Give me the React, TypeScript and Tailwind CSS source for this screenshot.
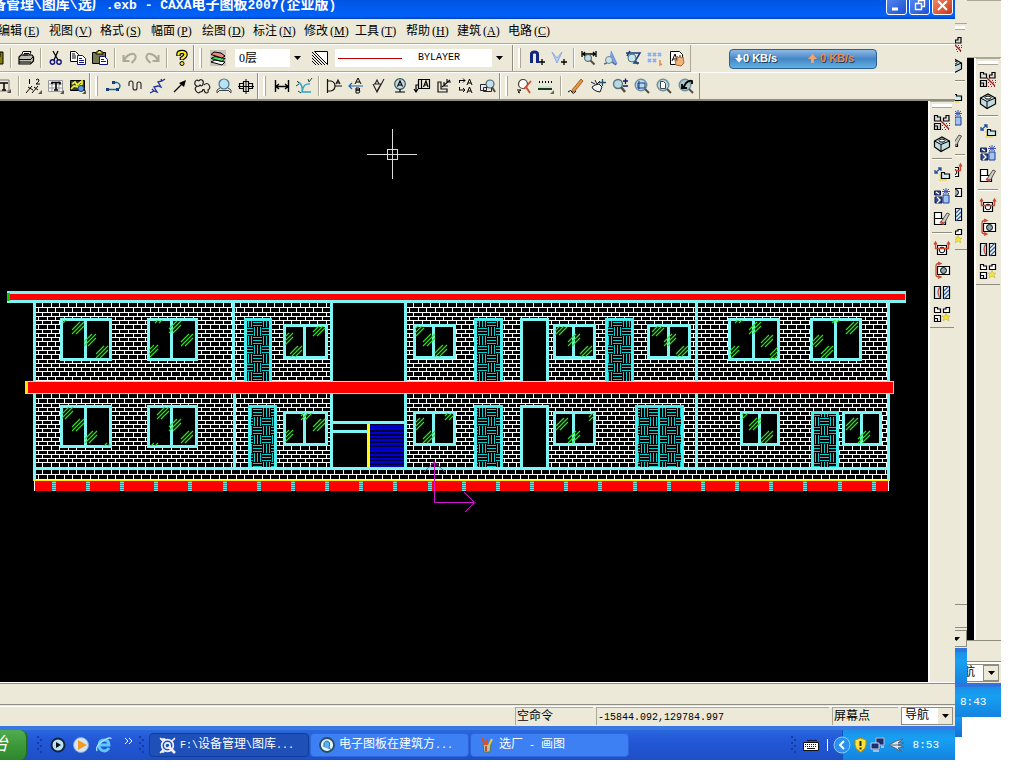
import React from "react";

const FONT = "font-['Liberation_Mono','Noto_Sans_CJK_SC',monospace]";

/* Splits a string so that half-width and full-width runs share one 6px/12px grid. */
function T({ s, ascii = "text-[10px]", cjk = "text-[12px]" }: { s: string; ascii?: string; cjk?: string }) {
  const runs = s.match(/[\x00-\x7f]+|[^\x00-\x7f]+/g) ?? [];
  return (
    <span className="whitespace-pre">
      {runs.map((r, i) => (
        <span key={i} className={r.charCodeAt(0) < 128 ? ascii : cjk}>
          {r}
        </span>
      ))}
    </span>
  );
}

/* ---------- icons ---------- */

const glyphs: Record<string, React.ReactNode> = {
  save: (
    <>
      <path d="M1 2h14v12H2l-1-1z" fill="#808000" stroke="#000" />
      <path d="M4 2h8v5H4z" fill="#fff" stroke="#000" />
      <path d="M5 10h7v4H5z" fill="#000" />
    </>
  ),
  print: (
    <>
      <path d="M5 1.5h8l-2 5H3z" fill="#fff" stroke="#000" />
      <path d="M1 7l2-2h11l1.500 2v4l-3 3H1z" fill="#bdbdb0" stroke="#000" strokeWidth="1.200" />
      <path d="M1 9.500h12M1 12h12M13 9l2-2M6 3.500h5M5 5h5" stroke="#000" />
    </>
  ),
  cut: (
    <>
      <path d="M5 1l5 9M10 1L6 10" stroke="#000" strokeWidth="1.300" />
      <circle cx="4.500" cy="12" r="2.200" stroke="#10107c" strokeWidth="1.400" />
      <circle cx="11" cy="12" r="2.200" stroke="#10107c" strokeWidth="1.400" />
    </>
  ),
  copy: (
    <>
      <path d="M.500 1.500h5l3 3v7h-8z" fill="#fff" stroke="#000" />
      <path d="M2 4h3M2 6h4M2 8h4" stroke="#000" />
      <path d="M7.500 5.500h5l3 3v6h-8z" fill="#fff" stroke="#10107c" />
      <path d="M9 8.500h3M9 10.500h5M9 12.500h5" stroke="#10107c" />
    </>
  ),
  paste: (
    <>
      <path d="M.500 2.500h13v11H.500z" fill="#77774a" stroke="#000" />
      <path d="M4 4V2h2V.500h3V2h2v2z" fill="#e8e05a" stroke="#000" />
      <path d="M7.500 6.500h5l3 3v5h-8z" fill="#fff" stroke="#10107c" />
      <path d="M9 9.500h3M9 11.500h5" stroke="#10107c" />
    </>
  ),
  undo: <path d="M1.500 5v6h6M2.500 10C5 4 12 2 13.500 6c1 3-2 5-4 7" stroke="#aaa89a" strokeWidth="2" />,
  redo: <path d="M14.500 5v6h-6M13.500 10C11 4 4 2 2.500 6c-1 3 2 5 4 7" stroke="#aaa89a" strokeWidth="2" />,
  help: (
    <>
      <path d="M4.500 6V4q0-2 3.500-2t3.500 2.500q0 2-3.500 4V10" stroke="#000" strokeWidth="4.500" />
      <circle cx="8" cy="13.500" r="2" fill="#ffe818" stroke="#000" />
      <path d="M4.500 5.500V4q0-2 3.500-2t3.500 2.500q0 2-3.500 4v1" stroke="#ffe818" strokeWidth="2.200" />
    </>
  ),
  layers: (
    <>
      <path d="M0 0h16v16H0z" fill="#c9c5bd" />
      <path d="M1 12l4-2 10 2-3 3z" fill="#fff" stroke="#000" />
      <path d="M1 8.500l4-2 10 2-3 3z" fill="#49e15c" stroke="#000" />
      <path d="M1 4.500L4 2l7 1 4 3-3 2z" fill="#ee8686" stroke="#000" />
    </>
  ),
  linewidth: (
    <>
      <path d="M2.500 1.500H15.500V14.500z" fill="#fff" stroke="#000" />
      <path d="M0 2l13 13M0 5l10 10M0 8l7 7M0 11l4 4" stroke="#000" />
    </>
  ),
  magnet: (
    <>
      <path d="M2.500 13V4q0-2 3-2t3 2v9" stroke="#12267f" strokeWidth="3" />
      <path d="M13 9v6M10 12h6" stroke="#000" strokeWidth="1.300" />
    </>
  ),
  vsnap: (
    <>
      <path d="M1 2l5 11 5-11-5 6z" fill="#bcd0fa" stroke="#90a8e4" />
      <path d="M13 9v6M10 12h6" stroke="#000" strokeWidth="1.300" />
    </>
  ),
  dimsearch: (
    <>
      <path d="M1 1v6M15 1v6M2 4h12M4 2L2 4l2 2M12 2l2 2-2 2" stroke="#000" strokeWidth="1.300" />
      <circle cx="7" cy="8" r="3.500" fill="#b5dfe8" stroke="#55584e" />
      <path d="M9.500 10.500l4 4" stroke="#554c44" strokeWidth="2" />
    </>
  ),
  textsearch: (
    <>
      <path d="M8 1l6 13h-3l-2-4H6" fill="#7aa4ec" stroke="#688cda" />
      <circle cx="6" cy="10" r="3.500" fill="#c4e4ec" stroke="#77818c" />
      <path d="M9 12l4 3M1 14l3-1" stroke="#5a6d8c" strokeWidth="1.500" />
    </>
  ),
  zsearch: (
    <>
      <path d="M1 3h14L9 13h5M2 6l3-5" stroke="#173e83" strokeWidth="1.500" />
      <circle cx="7" cy="8" r="4" fill="#b8e4ec" fillOpacity=".8" stroke="#4e7283" />
      <path d="M10 11l3 3" stroke="#344c65" strokeWidth="2" />
    </>
  ),
  points: (
    <>
      <path d="M1 3l3 3m0-3L1 6M6 3l3 3m0-3L6 6M1 9l3 3m0-3l-3 3M6 9l3 3m0-3l-3 3M11 3l3 3m0-3l-3 3" stroke="#8caef2" strokeWidth="2" />
      <path d="M13 10v5l2-1" stroke="#e28a54" strokeWidth="1.500" />
    </>
  ),
  handpage: (
    <>
      <path d="M1.500 1.500h9l3 3v10h-12z" fill="#fff" stroke="#000" />
      <path d="M3 11l3-7 2 6M4 9h3" stroke="#000" />
      <path d="M7 15l-1-5 2 1V6l2 2 1-3 1 3 2-1 1 6-3 3z" fill="#efb37a" stroke="#b4683c" />
    </>
  ),
  textbox: (
    <>
      <path d="M1 2h12v11H1z" stroke="#777" />
      <path d="M4 5h8M8 5v7M6 12h4" stroke="#000" strokeWidth="1.500" />
      <path d="M15 11v4h-4z" fill="#555" />
    </>
  ),
  half: (
    <>
      <path d="M3.500 1v5M10 2q2-2 3 0 0 2-3 4h4" stroke="#000" />
      <path d="M0 15l6-7M6 15l6-7M2 9l5 3M8 9l4 3" stroke="#000" />
      <path d="M16 12v4h-4z" fill="#555" />
    </>
  ),
  gridtext: (
    <>
      <path d="M.500 2.500h14v11H.500zM0 6h15M0 10h15M4 2v12M11 2v12" stroke="#999" fill="#f8f8f8" />
      <path d="M4 4.500h8v2M4 4v2M8 4v8M6 12h4" stroke="#000" strokeWidth="1.600" />
      <path d="M16 12v4h-4z" fill="#555" />
    </>
  ),
  library: (
    <>
      <path d="M.500 2.500h14v10H.500z" fill="#343c34" stroke="#000" />
      <path d="M2 6l3-2 2 3 5-4v3L8 9 4 8l-3 3" stroke="#f0ee33" strokeWidth="1.700" />
      <circle cx="11" cy="10.500" r="3" fill="#5b9de2" stroke="#153b7a" />
      <path d="M16 12v4h-4z" fill="#555" />
    </>
  ),
  arc: (
    <>
      <path d="M1 11.500h10q3-1 3-3.500t-3-3.500H7" stroke="#156b8c" strokeWidth="1.300" />
      <path d="M0 10h3v3H0zM6 3h3v3H6zM10 10h3v3h-3z" fill="#12407d" />
    </>
  ),
  wave: <path d="M1 8V5q0-2 2-2t2 2v5q0 2 2 2t2-2V6q0-2 2-2t2 2v5" stroke="#222" strokeWidth="1.100" />,
  zigzag: <path d="M0 15l4-2 3 1-3-5 4-1 3 1-3-5 4-1 3-2M4 13l-2-2M12 3l-1-2" stroke="#1d2f9b" strokeWidth="1.300" />,
  arrow: (
    <>
      <path d="M2 14l9-9" stroke="#000" strokeWidth="1.300" />
      <path d="M14 2L12 9 7 5z" fill="#000" />
    </>
  ),
  cloud: (
    <path
      d="M5 3Q2 1 1 4t2 4q2 1 3-1 2 2 3-1t-1-4q-2-1-3 1M10 7q3-3 5 0t-1 5q1 3-2 3-2-1-2-4M3 8q-3 2-1 5t4 1q3 0 3-3"
      stroke="#222"
      strokeWidth="1.200"
    />
  ),
  bulb: (
    <>
      <circle cx="8" cy="6" r="5" fill="#b7e4f5" stroke="#4b748c" strokeWidth="1.200" />
      <path d="M4 10l-3 2v3l3-3M12 10l3 2v3l-3-3M4 12.500h8" stroke="#444" />
    </>
  ),
  plug: (
    <>
      <path d="M5.500 3.500h5v10h-5zM1.500 5.500h4v5h-4zM10.500 5.500h4v5h-4z" stroke="#000" strokeWidth="1.200" />
      <path d="M8 1v15M0 8.500h16" stroke="#000" />
    </>
  ),
  dim: <path d="M1.500 2v12M14.500 2v12M2 8.500h12M5 6L2 8.500 5 11M11 6l3 2.500-3 2.500" stroke="#000" strokeWidth="1.400" />,
  axes: (
    <>
      <path d="M2 4q5 2 4 10h9M6 14q1-9 8-8" stroke="#2ba3cc" strokeWidth="1.400" />
      <path d="M0 8l3-2M1 3l2 2M12 1l1 3 3-4M2 13l3 2" stroke="#20494e" />
    </>
  ),
  section: <path d="M1.500 1v14M1 3h4q4 1 4 5t-4 5H1M9 8h7M10 6l2-4 2 4M10.500 5h3" stroke="#111" strokeWidth="1.200" />,
  ab: (
    <>
      <path d="M7 6l3-6 3 6M8 4h4M8 15v-5h3l1 1-1 1H8h3l1 1-1 2z" stroke="#000" />
      <path d="M1 8h14M4 5L1 8l3 3" stroke="#225fac" strokeWidth="1.200" />
    </>
  ),
  rough: <path d="M3 6l4 8 7-13M4 6h7l-4 7M5 6l2-4 2 4" stroke="#222" strokeWidth="1.100" />,
  datum: (
    <>
      <circle cx="8" cy="6" r="5.300" fill="#c5dbe2" stroke="#32565e" strokeWidth="1.200" />
      <path d="M5.500 8.500L8 3l2.500 5.500M6.500 7h3M8 11v3M3 14h10" stroke="#000" strokeWidth="1.200" />
    </>
  ),
  frame: <path d="M4.500 1.500h11v9h-11zM7.500 1v9M9.500 9L12 3l2 6M10 7h3M4 7H2v7M0 11l2 3 2-3" stroke="#000" strokeWidth="1.200" />,
  weld: <path d="M2 4v10h9v-3H5V4zM6 9l8-7M8 4v4h4M11 1v3h4" stroke="#111" strokeWidth="1.200" />,
  aa: <path d="M1 2.500h6M5 .500l2 2-2 2M1.500 2v3M9 7l2.500-6L14 7M10 5h3M1 12h6M5 10l2 2-2 2M1.500 9v3M9 15l2.500-6 2.500 6M10 13h3" stroke="#000" />,
  boxsearch: (
    <>
      <path d="M.500 6.500h6v6h-6zM3.500 9.500h8v4h-8z" stroke="#223" />
      <circle cx="10" cy="6" r="4" fill="#c5e0ec" stroke="#4b6474" strokeWidth="1.200" />
      <path d="M12 9l3 5" stroke="#554c44" strokeWidth="2" />
    </>
  ),
  findred: (
    <>
      <circle cx="7" cy="6" r="4.500" fill="#fff" stroke="#423b36" strokeWidth="1.200" />
      <path d="M10 9l4 6M15 3L8 11" stroke="#c4502e" strokeWidth="1.800" />
      <path d="M1 12h4l-3 2 2 1" stroke="#000" />
    </>
  ),
  ruler: (
    <>
      <path d="M1 4h1m2 0h1m2 0h1m2 0h1m2 0h1" stroke="#000" strokeWidth="2" />
      <path d="M0 11h14" stroke="#1a382d" strokeWidth="2" />
      <path d="M0 9h14" stroke="#b8dcb8" />
      <path d="M16 12v4h-4z" fill="#6b694c" />
    </>
  ),
  pencil: (
    <>
      <path d="M4 12L13 1l2 2-8 10-3 1z" fill="#e5953c" stroke="#a5622a" />
      <path d="M0 14q3-3 4 0t4-1" stroke="#000" />
    </>
  ),
  pan: (
    <>
      <path d="M1 4l4 2M5 2l2 4 3-3M2 9l3-2 4-1 3 3-2 5-4-1-3-2z" stroke="#121c26" fill="#f3f3f0" />
      <path d="M12.500 1v7M9 4.500h7" stroke="#22506b" strokeWidth="1.300" />
    </>
  ),
  zoompm: (
    <>
      <circle cx="6" cy="6" r="4.500" fill="#b8d8e4" stroke="#55717e" strokeWidth="1.300" />
      <path d="M9 9l4 5" stroke="#554c44" strokeWidth="2.500" />
      <path d="M11 3h5M13.500.500V6M11 8h5" stroke="#10196f" strokeWidth="1.300" />
    </>
  ),
  zoomwin: (
    <>
      <circle cx="7" cy="7" r="5.800" fill="#b8d8e4" stroke="#70909c" strokeWidth="1.400" />
      <path d="M4 5h7v5H4zM5 3v8" stroke="#163a8b" />
      <path d="M11 11l4 4" stroke="#554c44" strokeWidth="2" />
    </>
  ),
  zoompage: (
    <>
      <circle cx="7" cy="7" r="5.800" fill="#b8d8e4" stroke="#70909c" strokeWidth="1.400" />
      <path d="M4.500 3.500h3l2 2v5h-5z" fill="#fff" stroke="#444" />
      <path d="M11 11l4 4" stroke="#554c44" strokeWidth="2" />
    </>
  ),
  zoomback: (
    <>
      <circle cx="7" cy="7" r="5.800" fill="#aac6cc" stroke="#70909c" strokeWidth="1.400" />
      <path d="M5 10l3-5q3-3 6-2v3M4 6v4h5" stroke="#000" strokeWidth="1.800" />
      <path d="M11 11l4 4" stroke="#554c44" strokeWidth="2" />
    </>
  ),
  blocks: (
    <>
      <path d="M.500 1.500h3V3h3v4h-6zM9.500 7V4H12V1.500h3V7zM.500 9.500h6v6h-6zM.500 12h3v3.500" stroke="#000" strokeWidth="1.200" fill="#ddd" />
      <path d="M7 7l8 8" stroke="#a11b24" strokeWidth="1.300" />
      <path d="M12 9.500h1m2 0h1m-3 2h1m1 0h1m-8 0h1m1 2h1m-3 2h1m2 0h1m2 0h1" stroke="#a11b24" />
    </>
  ),
  cube: (
    <>
      <path d="M.500 5L8 1l7.500 4v6L7 15.500.500 11z" fill="#c3dce2" stroke="#000" strokeWidth="1.200" />
      <path d="M.500 5L7 8.500l8.500-3.500M7 8.500v7" stroke="#000" />
      <ellipse cx="8" cy="4.600" rx="3" ry="1.500" fill="#fff" stroke="#000" />
    </>
  ),
  move: (
    <>
      <path d="M5 9h2v4M5 14h8" stroke="#f0d878" strokeWidth="2" />
      <path d="M1 7l6-5M4 2h3v3M1 4v3h3" stroke="#27549d" strokeWidth="1.300" />
      <path d="M7.500 6.500h3V8h5v4.500h-8z" fill="#c9ecf3" stroke="#000" strokeWidth="1.200" />
    </>
  ),
  array: (
    <>
      <path d="M.500 3h6v4h-6zM1 9h7v6H1z" fill="#30488f" stroke="#111c50" />
      <path d="M9 7h6v8H9z" fill="#9ec3f4" stroke="#1f3c91" />
      <path d="M9 1l6 5m0-5L9 6M8 3.500h8M12 0v6" stroke="#3756b9" />
      <path d="M3 9l3 3-3 3M2 4l3 2" stroke="#fff" strokeWidth="1.300" />
    </>
  ),
  erase: (
    <>
      <path d="M.500 2.500h7v6h-7zM.500 8.500h11v6H.500z" fill="#fff" stroke="#000" strokeWidth="1.200" />
      <path d="M7 12l6-9 2.500 1-5 9z" fill="#d0cbc2" stroke="#555" />
      <path d="M6 12l4 2" stroke="#cc4e43" strokeWidth="2" />
    </>
  ),
  clampv: (
    <>
      <path d="M3.500 5.500h9v9h-9z" fill="#fff" stroke="#000" strokeWidth="1.200" />
      <circle cx="8" cy="10" r="2.800" stroke="#000" />
      <path d="M1.500 2v6.500h13V2M0 4.500L1.500 2 3 4.500M13 4.500L14.500 2 16 4.500" stroke="#c94a35" strokeWidth="1.300" />
    </>
  ),
  clamph: (
    <>
      <path d="M3.500 4.500h12v8h-12z" fill="#fff" stroke="#000" strokeWidth="1.200" />
      <circle cx="9.500" cy="8.500" r="3" fill="#8ca8a8" stroke="#000" />
      <path d="M6 1.500Q2 1 2 4v9q0 2 4 2M4 0l3 1.500L4 3M4 16.500L7 15l-3-1.500" stroke="#c94a35" strokeWidth="1.300" />
    </>
  ),
  hatch: (
    <>
      <path d="M.500 2.500h6v12h-6z" fill="#ccecf6" stroke="#000" strokeWidth="1.200" />
      <path d="M9.500 2.500h6v12h-6z" fill="#fff" stroke="#000" strokeWidth="1.200" />
      <path d="M10 7l5-5M10 11l5-5M10 15l5-5" stroke="#2b60a0" strokeWidth="1.300" />
      <path d="M6 3q-4 5 0 11" stroke="#cf4b3c" strokeWidth="1.300" />
    </>
  ),
  explode: (
    <>
      <path d="M.500 1.500h3V3h3v3.500h-6zM9.500 6.500V3H12V1.500h3.500v5zM.500 9.500h6v6h-6zM.500 12.500h3v3" stroke="#000" strokeWidth="1.200" fill="#fff" />
      <path d="M12 7l1 3h3l-2 2 1 3-3-2-3 2 1-3-2-2h3z" fill="#f2e53b" stroke="#c9b53a" strokeWidth=".6" />
    </>
  ),
};

function IconButton({ name, label }: { name: string; label: string }) {
  return (
    <button type="button" aria-label={label} className="flex h-[22px] w-[22px] shrink-0 items-center justify-center">
      <svg width="16" height="16" viewBox="0 0 16 16" fill="none" overflow="visible">
        {glyphs[name]}
      </svg>
    </button>
  );
}

const Sep = () => (
  <div className="flex w-2 shrink-0 justify-center py-[3px]">
    <div className="w-[2px] border-l border-[#aca899] bg-white" />
  </div>
);

const Grip = () => (
  <div className="flex w-[14px] shrink-0">
    <div className="w-[2px] border-l border-[#8f8c80] bg-white" />
    <div className="my-[3px] ml-1 w-[3px] border-r border-[#aca899] bg-white" />
  </div>
);

type Item = [string, string] | "|" | "#";

function Items({ items }: { items: Item[] }) {
  return (
    <>
      {items.map((it, i) =>
        it === "|" ? <Sep key={i} /> : it === "#" ? <Grip key={i} /> : (
          <div key={i} className="flex items-center">
            <IconButton name={it[0]} label={it[1]} />
          </div>
        )
      )}
    </>
  );
}

const fileItems: Item[] = [
  ["save", "保存"], "|", ["print", "打印"], "|", ["cut", "剪切"], ["copy", "复制"], ["paste", "粘贴"], "|",
  ["undo", "撤销"], ["redo", "重做"], "|", ["help", "帮助"], "#", ["layers", "图层"],
];
const snapItems: Item[] = [
  ["magnet", "捕捉"], ["vsnap", "捕捉点"], "|", ["dimsearch", "尺寸查询"], ["textsearch", "文字查询"],
  ["zsearch", "图形查询"], ["points", "点"], ["handpage", "页面"],
];
const drawItems: Item[] = [
  ["textbox", "文字"], "|", ["half", "公式"], ["gridtext", "表格"], ["library", "图库"], "#",
  ["arc", "圆弧"], ["wave", "波浪线"], ["zigzag", "折线"], ["arrow", "箭头"], ["cloud", "云线"],
  ["bulb", "局部放大"], ["plug", "孔轴"], "#", ["dim", "尺寸"], ["axes", "坐标"], "|",
  ["section", "倒角"], ["ab", "引出"], ["rough", "粗糙度"], ["datum", "基准"], ["frame", "形位公差"],
  ["weld", "焊接"], ["aa", "剖切"], ["boxsearch", "标注编辑"], "#", ["findred", "查找"], ["ruler", "距离"], "|",
  ["pencil", "重画"], ["pan", "平移"], ["zoompm", "缩放"], ["zoomwin", "窗口"], ["zoompage", "全部"], ["zoomback", "回溯"],
];
const sideItems: Item[] = [
  ["blocks", "块"], ["cube", "实体"], "|", ["move", "平移"], ["array", "阵列"], ["erase", "删除"], "|",
  ["clampv", "拉伸"], ["clamph", "旋转"], ["hatch", "镜像"], ["explode", "打散"],
];

function SideBar({ clip = false }: { clip?: boolean }) {
  return (
    <div className={clip ? "-ml-[15px] flex w-[27px] flex-col" : "flex w-[27px] shrink-0 flex-col border-l-2 border-white bg-[#ece9d8] pr-px"}>
      <div className="h-[10px] border-t border-[#aca899] px-[2px] pt-[2px]">
        <div className="h-[4px] border-b border-[#aca899] bg-white" />
      </div>
      <div className="flex flex-col items-center border-b border-[#8f8c80] pb-[2px]">
        {sideItems.map((it, i) =>
          it === "|" ? (
            <div key={i} className="flex h-2 w-full items-center px-[2px]">
              <div className="h-[2px] w-full border-t border-[#8f8c80] bg-white" />
            </div>
          ) : (
            <IconButton key={i} name={it[0]} label={it[1]} />
          )
        )}
      </div>
    </div>
  );
}

const Caret = () => (
  <span className="pointer-events-none flex w-[14px] shrink-0 items-center justify-center bg-[#ece9d8]">
    <svg width="7" height="4" viewBox="0 0 7 4">
      <path d="M0 0h7L3.500 4z" fill="#000" />
    </svg>
  </span>
);

/* ---------- building elevation ---------- */

const CY = "#7df5f5";

function bricks(x0: number, y0: number, x1: number, y1: number) {
  let d = "";
  for (let row = 0; y0 + row * 4.27 < y1; row++) {
    const top = Math.round(y0 + row * 4.27);
    const bottom = Math.min(y1, Math.round(y0 + (row + 1) * 4.27));
    if (bottom < y1) d += `M${x0} ${bottom}h${x1 - x0}v1H${x0}z`;
    for (let x = x0 + (row % 2 ? 2 : 6); x < x1; x += 8.6) d += `M${Math.round(x)} ${top}h1V${bottom}h-1z`;
  }
  return <path d={d} fill="#fff" shapeRendering="crispEdges" />;
}

type Box = [number, number, number, number];
const windows: { b: Box; g: [number, number][] }[] = [
  { b: [60, 318, 112, 361], g: [[78, 328], [90, 340], [102, 352], [65, 317]] },
  { b: [147, 318, 198, 361], g: [[175, 327], [187, 340], [152, 351], [161, 317]] },
  { b: [283, 324, 328, 359], g: [[287, 339], [296, 352], [319, 330]] },
  { b: [413, 324, 456, 359], g: [[418, 330], [429, 340], [441, 351]] },
  { b: [553, 324, 596, 359], g: [[561, 329], [574, 340], [586, 352]] },
  { b: [647, 324, 691, 359], g: [[658, 330], [670, 340], [682, 352]] },
  { b: [728, 318, 780, 361], g: [[755, 328], [767, 341], [733, 352], [741, 317], [776, 353]] },
  { b: [810, 318, 862, 361], g: [[817, 341], [827, 352], [852, 328], [838, 317]] },
  { b: [60, 405, 112, 448], g: [[67, 413], [78, 425], [91, 437], [105, 449]] },
  { b: [147, 405, 198, 448], g: [[163, 413], [175, 425], [187, 437], [152, 449]] },
  { b: [283, 411, 328, 446], g: [[307, 414], [319, 425], [287, 436]] },
  { b: [413, 411, 456, 446], g: [[418, 424], [429, 437], [451, 414]] },
  { b: [553, 411, 596, 446], g: [[562, 424], [574, 437], [595, 415]] },
  { b: [740, 411, 780, 446], g: [[744, 413], [755, 424], [767, 437]] },
  { b: [842, 411, 882, 446], g: [[852, 424], [864, 437]] },
];
const wovenDoors: Box[] = [
  [244, 318, 272, 382], [474, 318, 503, 382], [605, 318, 634, 382],
  [248, 405, 277, 468], [474, 405, 503, 468], [635, 405, 684, 468], [811, 411, 839, 468],
];
const openDoors: Box[] = [[520, 318, 549, 382], [520, 405, 549, 468]];

function glint([cx, cy]: [number, number]) {
  return `M${cx - 6} ${cy + 2}l8 -8M${cx - 6} ${cy + 6}l12 -12M${cx - 2} ${cy + 6}l8 -8`;
}

function Elevation() {
  return (
    <svg
      className="block min-w-0 flex-1 bg-black"
      viewBox="0 101 928 581"
      preserveAspectRatio="xMidYMid meet"
      role="img"
      aria-label="选厂立面图"
    >
      <defs>
        <pattern id="weave" width="18" height="18" patternUnits="userSpaceOnUse" x="1" y="3">
          <path
            d="M1 0h1v9h-1zM4 0h1v9h-1zM7 0h1v9h-1zM9 1h9v1h-9zM9 4h9v1h-9zM9 7h9v1h-9zM0 10h9v1h-9zM0 13h9v1h-9zM0 16h9v1h-9zM10 9h1v9h-1zM13 9h1v9h-1zM16 9h1v9h-1z"
            fill="#10cccc"
            shapeRendering="crispEdges"
          />
        </pattern>
        <pattern id="stud" width="4" height="2" patternUnits="userSpaceOnUse">
          <path d="M0 0h4v2H0z" fill="#5a7f86" />
          <path d="M0 0h4v1H0z" fill="#6de3e3" />
        </pattern>
      </defs>

      {bricks(36, 303, 331, 381)}
      {bricks(407, 303, 888, 381)}
      {bricks(36, 394, 331, 467)}
      {bricks(407, 394, 888, 467)}
      {bricks(36, 470, 888, 480)}

      <g shapeRendering="crispEdges">
        {windows.map(({ b: [x1, y1, x2, y2] }, i) => (
          <g key={i} fill="#000" stroke={CY} strokeWidth="3">
            <rect x={x1 + 1.5} y={y1 + 1.5} width={x2 - x1 - 3} height={y2 - y1 - 3} />
            <path d={`M${Math.floor((x1 + x2) / 2) - 0.5} ${y1 + 1}V${y2 - 1}`} />
          </g>
        ))}
        {openDoors.map(([x1, y1, x2, y2], i) => (
          <path key={i} d={`M${x1 + 1.5} ${y2}V${y1 + 1.5}H${x2 - 1.5}V${y2}`} fill="#000" stroke={CY} strokeWidth="3" />
        ))}
        {wovenDoors.map(([x1, y1, x2, y2], i) => (
          <g key={i}>
            <path d={`M${x1} ${y1}H${x2}V${y2}H${x1}z`} fill="#000" />
            <path d={`M${x1} ${y1}H${x2}V${y2}H${x1}z`} fill="url(#weave)" />
            <path d={`M${x1 + 1.5} ${y2}V${y1 + 1.5}H${x2 - 1.5}V${y2}`} fill="none" stroke="#49eded" strokeWidth="3" />
          </g>
        ))}
        <path d="M659 408V468" stroke="#12dede" strokeWidth="2" />
      </g>

      {windows.map(({ b: [x1, y1, x2, y2] }, i) => (
        <clipPath key={i} id={`pane${i}`}>
          <rect x={x1 + 2} y={y1 + 2} width={x2 - x1 - 4} height={y2 - y1 - 4} />
        </clipPath>
      ))}
      {windows.map(({ g }, i) => (
        <path key={i} d={g.map(glint).join("")} stroke="#2ee022" strokeWidth="1.200" fill="none" clipPath={`url(#pane${i})`} />
      ))}

      <g shapeRendering="crispEdges">
        {/* walls */}
        <path
          d="M33 303h3v178h-3zM232 303h3v78h-3zM233 394h3v74h-3zM330 303h3v164h-3zM404 303h3v164h-3zM695 303h3v165h-3zM887 303h3v178h-3zM33 467h857v3H33z"
          fill={CY}
        />
        {/* stair hall */}
        <path d="M333 421h71v3h-71zM333 430h35v3h-35z" fill={CY} />
        <path d="M370 424h34v43h-34z" fill="#000038" />
        <path
          d="M370 425h34v2h-34zM370 428h34v2h-34zM370 432h34v2h-34zM370 436h34v2h-34zM370 439h34v2h-34zM370 443h34v2h-34zM370 447h34v2h-34zM370 450h34v2h-34zM370 454h34v2h-34zM370 458h34v2h-34zM370 461h34v2h-34zM370 465h34v2h-34z"
          fill="#0000d0"
        />
        <path d="M367 424h3v43h-3z" fill="#ff0" />
        {/* roof slab */}
        <path d="M7 291h899v12H7z" fill={CY} />
        <path d="M10 294h895v6H10z" fill="#f00" />
        <path d="M7 293h3v8H7z" fill="#0cc80c" />
        {/* floor slab */}
        <path d="M25 381h869v13H25z" fill="#ffe600" />
        <path d="M28 382h865v11H28z" fill="#f00" />
        {/* plinth */}
        <path d="M34 480h855v1H34z" fill="#ffe600" />
        <path d="M34 481h855v10H34z" fill="#fff" />
        <path d="M35 481h853v10H35z" fill="#f00" />
        {Array.from({ length: 25 }, (_, i) => (
          <rect key={i} x={Math.round(51.7 + i * 34.17)} y="481" width="4" height="10" fill="url(#stud)" />
        ))}
      </g>

      {/* coordinate axes */}
      <path d="M434.500 462V502.500H474M424 472l10.500-10 10.500 10M464 492l10.500 10.500L465 512" fill="none" stroke="#d613d6" />
      {/* cursor */}
      <path d="M367 154.500h50M392.500 129v50M387.500 149.500h10v10h-10z" fill="none" stroke="#dcdcdc" shapeRendering="crispEdges" />
    </svg>
  );
}

/* ---------- window chrome ---------- */

const menus: [string, string][] = [
  ["编辑", "E"], ["视图", "V"], ["格式", "S"], ["幅面", "P"], ["绘图", "D"], ["标注", "N"],
  ["修改", "M"], ["工具", "T"], ["帮助", "H"], ["建筑", "A"], ["电路", "C"],
];

function CaptionButton({ label, close = false, children }: { label: string; close?: boolean; children: React.ReactNode }) {
  return (
    <button
      type="button"
      aria-label={label}
      className={
        close
          ? "flex h-[20px] w-[21px] items-center justify-center rounded-[3px] border border-white bg-linear-to-br from-[#f0906c] to-[#c83212]"
          : "flex h-[20px] w-[21px] items-center justify-center rounded-[3px] border border-white bg-linear-to-br from-[#5a8cf0] to-[#1c4ed2]"
      }
    >
      <svg width="14" height="14" viewBox="0 0 14 14" fill="none" stroke="#fff">
        {children}
      </svg>
    </button>
  );
}

const Dots = () => (
  <svg className="shrink-0" width="7" height="20" viewBox="0 0 7 20">
    <path d="M1 1h2v2H1zM4 4h2v2H4zM1 7h2v2H1zM4 10h2v2H4zM1 13h2v2H1zM4 16h2v2H4z" fill="#153ca5" />
  </svg>
);

const taskBg = "bg-linear-to-b from-[#2a68dc] via-[#2458d8] via-30% to-[#1d4fc6]";
const trayBg = "bg-linear-to-b from-[#1b8fe8] via-[#17a0f2] via-30% to-[#1483e0]";

function Taskbar() {
  return (
    <footer className={`flex h-[34px] shrink-0 items-stretch overflow-hidden border-t-4 border-[#3a78e2] text-white ${taskBg}`}>
      <button type="button" className="flex w-[28px] items-center overflow-hidden rounded-r-lg border-r-2 border-[#246b24] bg-linear-to-b from-[#52ab50] via-[#3c9a3a] to-[#2f862d]">
        <span className="-ml-[11px] text-[18px] italic leading-none">始</span>
      </button>
      <div className="ml-[8px] flex items-center">
        <Dots />
        <a href="#player" aria-label="播放器" className="ml-[7px]">
          <svg width="16" height="16" viewBox="0 0 16 16">
            <circle cx="8" cy="8" r="6.500" fill="#b9e2f4" stroke="#12233d" strokeWidth="2" />
            <path d="M6 5l5 3-5 3z" fill="#111" />
          </svg>
        </a>
        <a href="#media" aria-label="媒体" className="ml-[7px]">
          <svg width="16" height="16" viewBox="0 0 16 16">
            <circle cx="8" cy="8" r="7.500" fill="#d4e6f6" stroke="#7ba4d4" />
            <path d="M5 3l9 5-9 5z" fill="#f19a24" />
          </svg>
        </a>
        <a href="#browser" aria-label="浏览器" className="ml-[7px]">
          <svg width="16" height="16" viewBox="0 0 16 16" fill="none">
            <path d="M13 11q-2 3-5 3-5-1-5-6t5-5q5 0 5 5H4" stroke="#62c8fb" strokeWidth="2.800" />
            <path d="M1 14Q-1 9 7 4t8-2" stroke="#a8e4ff" strokeWidth="1.300" />
          </svg>
        </a>
        <button type="button" aria-label="更多" className="ml-3 mb-2">
          <svg width="8" height="6" viewBox="0 0 8 6" fill="none" stroke="#fff">
            <path d="M1 0l3 3-3 3M5 0l3 3-3 3" />
          </svg>
        </button>
        <div className="ml-[6px]">
          <Dots />
        </div>
      </div>
      <div className="ml-1 flex min-w-0 items-center gap-px py-[2px]">
        <button type="button" className="flex h-[24px] w-[160px] items-center gap-1 overflow-hidden rounded-sm border border-[#123c9b] bg-[#1e50b8] pl-[9px]">
          <svg className="shrink-0" width="17" height="17" viewBox="0 0 16 16" fill="none" stroke="#f4f1ff">
            <path d="M1 1l3 3M15 1l-3 3M1 15l3-3M2 2h4M2 14h3" strokeWidth="1.500" />
            <circle cx="8" cy="8" r="5.500" strokeWidth="1.600" />
            <circle cx="8" cy="8" r="2.500" strokeWidth="1.500" />
            <path d="M9 9l6 6" strokeWidth="2.500" />
          </svg>
          <T s="F:\设备管理\图库..." />
        </button>
        <button type="button" className="flex h-[24px] w-[159px] items-center gap-1 overflow-hidden rounded-sm border border-[#2c66dc] bg-[#3c80f4] pl-[8px]">
          <svg className="shrink-0" width="16" height="16" viewBox="0 0 16 16">
            <circle cx="8" cy="8" r="7" fill="#e9f4fa" stroke="#284c63" strokeWidth="1.800" />
            <path d="M5 10q-1-6 3-6 4 1 2 6l2 3" fill="#5ab2ea" stroke="#246ba5" />
          </svg>
          <T s="电子图板在建筑方..." />
        </button>
        <button type="button" className="flex h-[24px] w-[159px] items-center gap-1 overflow-hidden rounded-sm border border-[#2c66dc] bg-[#3c80f4] pl-[8px]">
          <svg className="shrink-0" width="16" height="16" viewBox="0 0 16 16" fill="none">
            <path d="M4 7h8l-1 8H5z" fill="#b4c9a4" stroke="#5c7150" />
            <path d="M6 8L3 1M8 8V2" stroke="#d9512c" strokeWidth="2" />
            <path d="M10 8l3-6" stroke="#efc840" strokeWidth="2" />
            <path d="M7 9v5" stroke="#c84632" strokeWidth="2" />
          </svg>
          <T s="选厂 - 画图" />
        </button>
      </div>
      <div className="ml-auto flex shrink-0 items-center">
        <Dots />
        <button type="button" aria-label="输入法" className="ml-[6px]">
          <svg width="16" height="12" viewBox="0 0 16 12" fill="none">
            <path d="M4 1l2 1 2-1 2 1 2-1 2 1" stroke="#111" />
            <path d="M.500 3.500h15v8H.500z" fill="#fff" stroke="#111" />
            <path d="M2 5.500h12M2 7.500h12" stroke="#111" strokeDasharray="1 1" />
            <path d="M4 9.500h8" stroke="#111" />
          </svg>
        </button>
        <div className="ml-[8px] h-[12px] w-px bg-white" />
        <div className={`ml-[14px] flex items-center self-stretch border-l border-[#0f52bb] pr-4 ${trayBg}`}>
          <button type="button" aria-label="展开" className="-ml-[10px]">
            <svg width="18" height="18" viewBox="0 0 18 18" fill="none">
              <circle cx="9" cy="9" r="8" fill="#2a8ff0" stroke="#8acbfa" />
              <path d="M11 5L7 9l4 4" stroke="#fff" strokeWidth="2" />
            </svg>
          </button>
          <svg className="ml-[3px]" width="13" height="16" viewBox="0 0 13 16">
            <path d="M6.500 1L12 3v5q0 4-5.500 7Q1 12 1 8V3z" fill="#ffe13b" stroke="#a98a17" />
            <path d="M5.500 4h2v5h-2zM5.500 10.500h2v2h-2z" fill="#222" />
          </svg>
          <svg className="ml-[3px]" width="16" height="16" viewBox="0 0 16 16">
            <path d="M6 1h8v7H6z" fill="#1c2d74" stroke="#b6bfd6" />
            <path d="M1 6h8v6H1z" fill="#1c2d74" stroke="#cdd4e8" />
            <path d="M3 14h6M11 10h3" stroke="#cdd4e8" strokeWidth="1.500" />
          </svg>
          <svg className="ml-[3px]" width="16" height="16" viewBox="0 0 16 16" fill="none">
            <path d="M0 8l7-4 7-2-5 4h6L9 8l6 2-6 1 4 4-7-4z" fill="#dce5ee" stroke="#51657e" />
            <path d="M2 8h9" stroke="#54687c" />
          </svg>
          <span className="ml-2">
            <T s="8:53" ascii="text-[11px]" />
          </span>
        </div>
      </div>
    </footer>
  );
}

function MainWindow() {
  return (
    <section className="mb-2 flex min-w-0 flex-1 flex-col bg-[#ece9d8]">
      <header className="flex h-[19px] shrink-0 items-end justify-between bg-linear-to-b from-[#0054e3] via-[#0062fa] via-85% to-[#0040b8] pr-[2px]">
        <h1 className="-ml-[8px] self-start font-bold leading-[10px] text-white">
          <T s="备管理\图库\选厂.exb - CAXA电子图板2007(企业版)" ascii="text-[13px]" cjk="text-[14px]" />
        </h1>
        <div className="mb-[4px] flex gap-[2px]">
          <CaptionButton label="最小化">
            <path d="M2 11h6" strokeWidth="3" />
          </CaptionButton>
          <CaptionButton label="还原">
            <path d="M5.500 5V2.500h6v6H9M2.500 5.500h6v6h-6z" strokeWidth="1.400" />
          </CaptionButton>
          <CaptionButton label="关闭" close>
            <path d="M2 3l9 9M11 3l-9 9" strokeWidth="2" />
          </CaptionButton>
        </div>
      </header>

      <nav className="flex h-[25px] shrink-0 items-center border-b border-[#aca899]">
        <div className="-ml-[2px] flex gap-[9px]">
          {menus.map(([name, key]) => (
            <button key={key} type="button" className="flex w-[42px] items-baseline gap-[2px] whitespace-nowrap text-[12px] leading-none">
              <span>{name}</span>
              <span className="font-['Liberation_Serif',serif]">
                (<u>{key}</u>)
              </span>
            </button>
          ))}
        </div>
      </nav>

      <div className="flex h-[28px] shrink-0 items-stretch border-t border-white">
        <div className="flex overflow-hidden border-r border-b border-[#aca899] pr-[2px]">
          <div className="-ml-[15px] flex">
            <Items items={fileItems} />
          </div>
          <div className="ml-[6px] flex items-center">
            <label className="flex h-[18px] w-[69px] bg-white">
              <select
                aria-label="图层"
                className="min-w-0 flex-1 appearance-none pl-1 font-['Liberation_Serif','Noto_Sans_CJK_SC',serif] text-[12px] leading-[18px]"
              >
                <option>0层</option>
              </select>
              <Caret />
            </label>
          </div>
          <div className="ml-[5px] flex items-center">
            <IconButton name="linewidth" label="线宽" />
          </div>
          <div className="ml-1 flex items-center">
            <label className="flex h-[18px] w-[171px] items-stretch bg-white">
              <svg className="ml-[3px] self-center" width="64" height="1" viewBox="0 0 64 1">
                <path d="M0 0h64v1H0z" fill="#c00000" />
              </svg>
              <select aria-label="线型" className="min-w-0 flex-1 appearance-none pl-4 text-[10px] leading-[18px]">
                <option>BYLAYER</option>
              </select>
              <Caret />
            </label>
          </div>
          <div className="ml-[6px] flex">
            <Grip />
            <Items items={snapItems} />
          </div>
        </div>
        <div className="ml-[38px] flex items-center">
          <div className="flex h-[20px] w-[148px] items-center rounded-[4px] border border-[#2b5f9c] bg-linear-to-b from-[#8db9e6] via-[#4586c6] to-[#63b2e2] px-[5px] font-['Liberation_Sans',sans-serif] text-[11px] font-bold text-white text-shadow-[1px_1px_0_#223c5c]">
            <span className="flex flex-1 items-center">
              <svg width="8" height="9" viewBox="0 0 9 9">
                <path d="M3 0h3v4h3L4.500 9 0 4h3z" fill="#fff" />
              </svg>
              0 KB/s
            </span>
            <span className="flex flex-1 items-center gap-[3px] pl-[10px] text-[#f08a45]">
              <svg width="9" height="9" viewBox="0 0 9 9">
                <path d="M3 9h3V5h3L4.500 0 0 5h3z" fill="#f2a36c" />
              </svg>
              0 KB/s
            </span>
          </div>
        </div>
      </div>

      <div className="flex h-[29px] shrink-0 items-stretch overflow-hidden border-t border-b-2 border-white border-b-[#8f8c80]">
        <div className="flex overflow-hidden border-r border-[#8f8c80]">
          <div className="-ml-[7px] flex pr-[2px]">
            <Items items={drawItems} />
          </div>
        </div>
      </div>

      <main className="flex flex-1 items-stretch">
        <Elevation />
        <SideBar />
      </main>

      <div className="h-[24px] shrink-0 border-t border-white">
        <div className="h-[22px] border-t border-b border-[#8f8c80]" />
      </div>
      <div className="flex h-[20px] shrink-0 items-stretch gap-[3px] border-t border-white pr-[2px] pb-px leading-none">
        <div className="flex-1" />
        <div className="flex w-[78px] items-center border-t border-l border-[#aca899] pt-px pl-px">
          <T s="空命令" />
        </div>
        <div className="flex w-[233px] items-center border-t border-l border-[#aca899] pt-px pl-px">
          <T s="-15844.092,129784.997" />
        </div>
        <div className="flex w-[66px] items-center border-t border-l border-[#aca899] pt-px pl-px">
          <T s="屏幕点" />
        </div>
        <label className="flex w-[52px] items-stretch border border-[#8f8c80] bg-white">
          <select aria-label="捕捉方式" className="min-w-0 flex-1 appearance-none pl-[3px] text-[12px] leading-[17px]">
            <option>导航</option>
          </select>
          <Caret />
        </label>
      </div>
      <Taskbar />
    </section>
  );
}

function WindowsBehind() {
  return (
    <aside className="flex w-[69px] shrink-0 flex-col pb-[31px]">
      <div className="flex flex-1 items-stretch">
        <div className="flex w-[12px] flex-col overflow-hidden bg-[#ece9d8]">
          <div className="h-[23px] shrink-0" />
          <SideBar clip />
          <div className="flex-1" />
          <div className="h-[24px] shrink-0 border-t border-b border-[#8f8c80]" />
          <div className="mt-[2px] flex h-[17px] shrink-0 items-center border border-l-0 border-[#8f8c80]">
            <svg width="5" height="4" viewBox="2 0 5 4">
              <path d="M0 0h7L3.500 4z" fill="#000" />
            </svg>
          </div>
          <div className={`mt-px h-[35px] shrink-0 border-t-4 border-[#2f74dc] ${trayBg}`} />
        </div>
        <div className="flex w-[34px] flex-col bg-[#ece9d8]">
          <div className="h-[58px] shrink-0 border-t border-b border-[#aca899]" />
          <div className="flex flex-1 bg-black pl-[7px]">
            <SideBar />
          </div>
          <div className="h-[22px] shrink-0 border-t border-b border-[#8f8c80]" />
          <div className="flex h-[21px] shrink-0 items-stretch border-t-2 border-white pr-[2px] pb-px">
            <div className="flex flex-1 items-center justify-between overflow-hidden border-t border-b border-[#8f8c80] bg-white">
              <span className="-ml-[4px] text-[12px] leading-[17px]">航</span>
              <span className="flex h-full w-[16px] items-center justify-center border border-[#8f8c80] bg-[#ece9d8]">
                <svg width="7" height="4" viewBox="0 0 7 4">
                  <path d="M0 0h7L3.500 4z" fill="#000" />
                </svg>
              </span>
            </div>
          </div>
        </div>
      </div>
      <div className={`flex h-[34px] w-[46px] shrink-0 items-center border-t-4 border-[#2f74dc] pl-[5px] text-white ${trayBg}`}>
        <T s="8:43" ascii="text-[11px]" />
      </div>
      <div className="h-[20px] w-[7px] shrink-0 bg-linear-to-b from-[#159af0] to-[#1470d4]" />
    </aside>
  );
}

export default function App() {
  return (
    <div className={`flex min-h-screen overflow-hidden bg-white text-[12px] text-black ${FONT}`}>
      <MainWindow />
      <WindowsBehind />
    </div>
  );
}
